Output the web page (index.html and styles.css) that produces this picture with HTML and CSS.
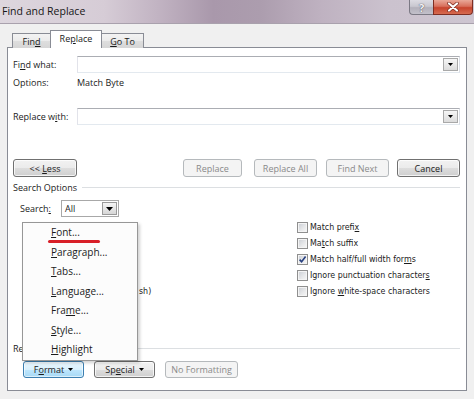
FILE: index.html
```html
<!DOCTYPE html>
<html>
<head>
<meta charset="utf-8">
<title>Find and Replace</title>
<link rel="stylesheet" href="styles.css">
</head>
<body>
<div class="window">
  <div class="titlebar">
    <span class="title">Find and Replace</span>
    <div class="caption-btns">
      <span class="cap help">?</span>
      <span class="cap close"><svg width="14" height="10" viewBox="0 0 14 10"><path d="M3 1.5 L11 8.5 M11 1.5 L3 8.5" stroke="#7a2a1e" stroke-width="3.6" stroke-linecap="round"/><path d="M3 1.5 L11 8.5 M11 1.5 L3 8.5" stroke="#ffffff" stroke-width="2.2" stroke-linecap="round"/></svg></span>
    </div>
  </div>
  <div class="client">
    <div class="tabs">
      <span class="tab"><span>Fin<u>d</u></span></span>
      <span class="tab active"><span>Re<u>p</u>lace</span></span>
      <span class="tab"><span><u>G</u>o To</span></span>
    </div>
    <div class="panel">
      <div class="field">
        <span class="label">Fi<u>n</u>d what:</span>
        <div class="combo"><span class="drop"><svg width="5" height="3" viewBox="0 0 5 3"><path d="M0 0 H5 L2.5 3 Z" fill="#000"/></svg></span></div>
      </div>
      <div class="options">
        <span class="label">Options:</span>
        <span>Match Byte</span>
      </div>
      <div class="field replace-field">
        <span class="label">Replace w<u>i</u>th:</span>
        <div class="combo"><span class="drop"><svg width="5" height="3" viewBox="0 0 5 3"><path d="M0 0 H5 L2.5 3 Z" fill="#000"/></svg></span></div>
      </div>
      <div class="actions">
        <span class="btn less"><span>&lt;&lt; <u>L</u>ess</span></span>
        <div class="action-group">
          <span class="btn disabled w-replace"><span>Replace</span></span>
          <span class="btn disabled w-all"><span>Replace All</span></span>
          <span class="btn disabled w-next"><span>Find Next</span></span>
          <span class="btn w-cancel"><span>Cancel</span></span>
        </div>
      </div>
      <div class="legend"><span>Search Options</span></div>
      <div class="search-row">
        <span class="search-label">Search<u>:</u></span>
        <div class="select"><span class="select-text">All</span><span class="select-drop"><svg width="7" height="4" viewBox="0 0 7 4"><path d="M0 0 H7 L3.5 4 Z" fill="#000"/></svg></span></div>
      </div>
      <div class="checks">
        <div class="col">
          <div class="check"><span class="box"></span></div>
          <div class="check"><span class="box"></span></div>
          <div class="check"><span class="box"></span></div>
          <div class="check"><span class="box"></span></div>
          <div class="check"><span class="box"></span><span class="tail">sh)</span></div>
        </div>
        <div class="col">
          <label class="check"><span class="box"></span><span>Match prefi<u>x</u></span></label>
          <label class="check"><span class="box"></span><span>Ma<u>t</u>ch suffix</span></label>
          <label class="check"><span class="box checked"><svg width="9" height="9" viewBox="0 0 9 9"><path d="M1.6 4.6 L3.6 6.8 L7.6 1.6" fill="none" stroke="#263f80" stroke-width="1.6"/></svg></span><span>Match half/full width for<u>m</u>s</span></label>
          <label class="check"><span class="box"></span><span>Ignore punctuation character<u>s</u></span></label>
          <label class="check"><span class="box"></span><span>Ignore <u>w</u>hite-space characters</span></label>
        </div>
      </div>
      <div class="legend replace-legend"><span>Re</span></div>
      <div class="bottom-btns">
        <span class="btn focused w-format"><span>F<u>o</u>rmat</span><svg width="5" height="3" viewBox="0 0 5 3"><path d="M0 0 H5 L2.5 3 Z" fill="#000"/></svg></span>
        <span class="btn w-special"><span>Sp<u>e</u>cial</span><svg width="5" height="3" viewBox="0 0 5 3"><path d="M0 0 H5 L2.5 3 Z" fill="#000"/></svg></span>
        <span class="btn disabled w-noformat"><span>No Formatting</span></span>
      </div>
    </div>
  </div>
  <div class="menu">
    <div class="menu-item"><u>F</u>ont...</div>
    <div class="menu-item"><u>P</u>aragraph...</div>
    <div class="menu-item"><u>T</u>abs...</div>
    <div class="menu-item"><u>L</u>anguage...</div>
    <div class="menu-item">Fra<u>m</u>e...</div>
    <div class="menu-item"><u>S</u>tyle...</div>
    <div class="menu-item"><u>H</u>ighlight</div>
    <span class="red-mark"></span>
  </div>
</div>
</body>
</html>
```

FILE: styles.css
```css
* { box-sizing: border-box; }
html, body { margin: 0; padding: 0; }
body {
  width: 474px;
  height: 399px;
  overflow: hidden;
  background: #f0f0f0;
  font-family: "Open Sans", "Noto Sans", sans-serif;
  font-size: 9px;
  color: #1b1b1b;
}
u { text-decoration: underline; text-underline-offset: 1px; }
.window {
  position: relative;
  width: 474px;
  height: 399px;
  background: #f0f0f0;
}
.titlebar {
  height: 24px;
  display: flex;
  justify-content: space-between;
  align-items: flex-start;
  background: linear-gradient(to right, #ddd6de 0%, #d6ccd6 22%, #c2b4c3 33%, #a998ab 45%, #ac9dae 55%, #bfb2c1 68%, #cbc2ce 82%, #cdc5d0 100%);
  border-bottom: 1px solid #a9a1ad;
}
.title {
  font-size: 10.5px;
  line-height: 23px;
  padding-left: 2px;
  color: #161616;
}
.caption-btns {
  display: flex;
  margin-right: 1px;
}
.cap {
  height: 15px;
  display: flex;
  align-items: center;
  justify-content: center;
}
.help {
  width: 24px;
  border: 1px solid #7b7984;
  border-top: none;
  border-right: none;
  border-bottom-left-radius: 4px;
  background: linear-gradient(#dcdbe2 0%, #c9c8d0 45%, #b3b1bb 55%, #c2c0ca 100%);
  color: #f4f4f6;
  font-weight: bold;
  font-size: 11px;
  text-shadow: 0 0 1px #56545e, 0 0 1px #56545e;
}
.close {
  width: 40px;
  border: 1px solid #7f2e22;
  border-top: none;
  border-bottom-right-radius: 4px;
  background: linear-gradient(#e9a898 0%, #d8705c 45%, #c7442d 55%, #d66b50 100%);
}
.client {
  padding: 6px 7px 0 7px;
}
.tabs {
  display: flex;
  align-items: flex-end;
  height: 18px;
  padding-left: 5px;
  position: relative;
  z-index: 1;
}
.tab {
  height: 15px;
  width: 39px;
  border: 1px solid #898c95;
  border-bottom: none;
  margin-right: -1px;
  background: linear-gradient(#f3f3f3 0%, #ebebeb 50%, #dedede 51%, #d6d6d6 100%);
  display: flex;
  align-items: center;
  justify-content: center;
  font-size: 9px;
}
.tab.active {
  height: 18px;
  width: 52px;
  background: #ffffff;
  position: relative;
  z-index: 2;
  padding-bottom: 2px;
}
.tab:last-child { width: 43px; }
.panel {
  margin-top: -1px;
  height: 344px;
  border: 1px solid #898c95;
  background: #ffffff;
  padding: 8px 6px 0 5px;
  display: flex;
  flex-direction: column;
}
.field {
  display: flex;
  height: 17px;
  align-items: center;
}
.label {
  width: 64px;
  flex: none;
}
.combo {
  flex: 1;
  height: 17px;
  border: 1px solid #abadb3;
  border-color: #abadb3 #dbdfe6 #e3e9ef #e2e3ea;
  background: #fff;
  display: flex;
  justify-content: flex-end;
  padding: 1px;
}
.drop {
  width: 15px;
  height: 13px;
  border: 1px solid #a9a9a9;
  background: linear-gradient(#f6f6f6, #dcdcdc);
  display: flex;
  align-items: center;
  justify-content: center;
}
.options {
  display: flex;
  height: 16px;
  margin-top: 1px;
  align-items: center;
}
.replace-field { margin-top: 18px; }
.actions {
  margin-top: 34px;
  display: flex;
  height: 18px;
}
.action-group {
  margin-left: auto;
  display: flex;
  gap: 9px;
}
.btn {
  height: 18px;
  border: 1px solid #707070;
  border-radius: 3px;
  background: linear-gradient(#f2f2f2 0%, #ebebeb 50%, #dddddd 51%, #cfcfcf 100%);
  box-shadow: inset 0 0 0 1px rgba(255, 255, 255, 0.75);
  display: flex;
  align-items: center;
  justify-content: center;
  gap: 4px;
  color: #1b1b1b;
}
.btn.disabled {
  border-color: #b5b9bc;
  background: #f4f4f4;
  color: #8a8a8a;
  box-shadow: none;
}
.btn.focused {
  border-color: #3c7fb1;
  background: linear-gradient(#eaf6fd 0%, #d9f0fc 50%, #bee6fd 51%, #a7d9f5 100%);
  box-shadow: inset 0 0 0 1px rgba(255, 255, 255, 0.6);
}
.less { width: 64px; }
.w-replace { width: 59px; margin-right: 3px; }
.w-all { width: 63px; }
.w-next { width: 63px; margin-right: -1px; }
.w-cancel { width: 63px; }
.legend {
  margin-top: 3px;
  height: 14px;
  display: flex;
  align-items: center;
  gap: 5px;
}
.legend::after {
  content: "";
  flex: 1;
  height: 1px;
  background: #dcdfe2;
}
.search-row {
  margin-top: 6px;
  height: 17px;
  display: flex;
  align-items: center;
  padding-left: 7px;
}
.search-label { width: 41px; }
.select {
  width: 58px;
  height: 17px;
  border: 1px solid #a8a8a8;
  background: #fff;
  display: flex;
  align-items: stretch;
  padding: 1px;
}
.select-text {
  flex: 1;
  padding-left: 2px;
  display: flex;
  align-items: center;
}
.select-drop {
  width: 15px;
  border: 1px solid #9a9a9a;
  background: linear-gradient(#f4f4f4, #d7d7d7);
  display: flex;
  align-items: center;
  justify-content: center;
}
.checks {
  margin-top: 2px;
  margin-left: 9px;
  display: grid;
  grid-template-columns: 275px 1fr;
}
.col {
  display: flex;
  flex-direction: column;
}
.check {
  height: 16px;
  display: flex;
  align-items: center;
  gap: 2px;
  font-family: "DejaVu Sans Condensed", "DejaVu Sans", sans-serif;
  font-stretch: condensed;
  font-size: 8.8px;
  color: #1b1b1b;
  white-space: nowrap;
}
.tail { margin-left: 104px; }
.box {
  width: 11px;
  height: 11px;
  flex: none;
  border: 1px solid #8f8f8f;
  background: linear-gradient(135deg, #c8ccd2 0%, #e6e7e9 55%, #f8f8f8 100%);
  box-shadow: inset 0 0 0 1px #f4f4f4;
  display: flex;
  align-items: center;
  justify-content: center;
}
.replace-legend { margin-top: 42px; gap: 40px; }
.bottom-btns {
  margin-top: 6px;
  display: flex;
  padding-left: 10px;
  gap: 10px;
}
.bottom-btns .btn { height: 17px; }
.w-format { width: 61px; }
.w-special { width: 61px; }
.w-noformat { width: 73px; }
.menu {
  position: absolute;
  left: 22px;
  top: 222px;
  width: 116px;
  height: 139px;
  border: 1px solid #979797;
  background: #fcfcfc;
  box-shadow: 2px 2px 3px rgba(0, 0, 0, 0.18);
  z-index: 5;
}
.menu-item {
  height: 19.5px;
  line-height: 19.5px;
  padding-left: 28px;
  font-size: 10px;
  color: #1b1b1b;
}
.red-mark {
  position: absolute;
  left: 25px;
  top: 17px;
  width: 52px;
  height: 3px;
  border-radius: 2px;
  background: #d81f28;
}
```
